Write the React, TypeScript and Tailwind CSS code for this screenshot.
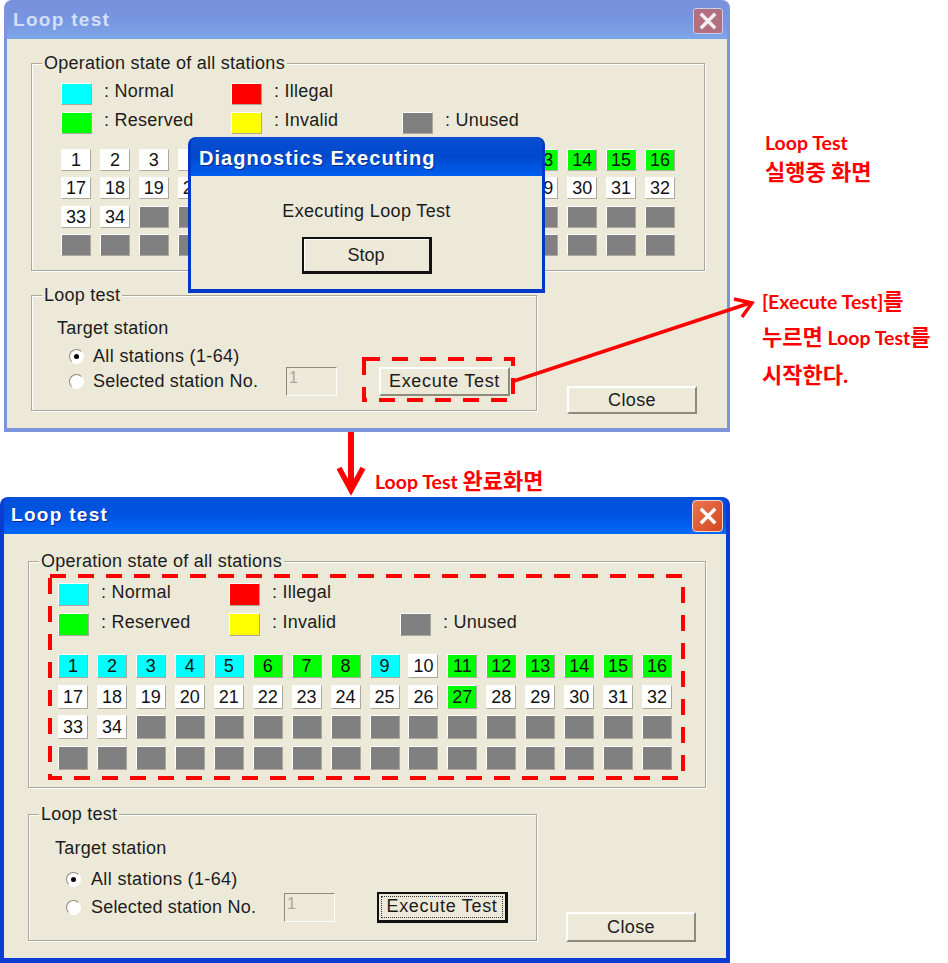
const sansFont = "font-['Liberation_Sans',Arial,sans-serif]";
const noteFont = "font-['Lato','Noto_Sans_CJK_KR',sans-serif]";

const raised =
  "border-[1.5px] border-t-white border-l-white border-r-[#aca899] border-b-[#aca899]";

type Tone = "white" | "cyan" | "green" | "gray" | "red" | "yellow";

const toneClass: Record<Tone, string> = {
  white: "bg-white",
  cyan: "bg-[#00ffff]",
  green: "bg-[#00ff00]",
  gray: "bg-[#808080]",
  red: "bg-[#ff0000]",
  yellow: "bg-[#ffff00]",
};

const layouts = {
  inactive: {
    frame: "left-[4px] top-0 w-[726px] h-[432px] bg-[#7d94dc] px-[3px] pb-[4px]",
    title: "h-[39px] pl-[6px] pr-[4px] pt-[2px] bg-gradient-to-b from-[#7990dc] via-[#7795e0] to-[#7ea6ea]",
    titleText: "text-[#d3dff6]",
    body: "h-[389px] pt-[24px] pl-[24px]",
    group1: "w-[674px] h-[208px] pl-[29px] pt-[19px]",
    legendGrid: "grid-cols-[170px_171px_1fr] gap-y-[7px]",
    swatch: "h-[22px]",
    cells: "mt-[15px] gap-y-[6.4px]",
    cell: "h-[22px]",
    lower: "mt-[24px]",
    group2: "w-[506px] h-[116px] pl-[25px] pt-[21px]",
    radios: "mt-[6px] gap-y-[3px] pl-[12px]",
    radioLabel: "ml-[9px]",
    close: "mt-[91px] ml-[30px] h-[28px]",
    execute: "h-[29px]",
  },
  active: {
    frame: "left-0 top-[497px] w-[730px] h-[466px] bg-[#0a3ed2] px-[4px] pb-[5px]",
    title: "h-[37px] pl-[7px] pr-[3px] bg-gradient-to-b from-[#0050d8] via-[#0054e3] to-[#0068f8]",
    titleText: "text-white [text-shadow:1px_1px_0_#0a2a90]",
    body: "h-[424px] pt-[27px] pl-[24px]",
    group1: "w-[678px] h-[227px] pl-[29px] pt-[21px]",
    legendGrid: "grid-cols-[171px_171px_1fr] gap-y-[7px]",
    swatch: "h-[23px]",
    cells: "mt-[18px] gap-y-[6.5px]",
    cell: "h-[24px]",
    lower: "mt-[26px]",
    group2: "w-[509px] h-[127px] pl-[26px] pt-[22px]",
    radios: "mt-[9px] gap-y-[6px] pl-[11px]",
    radioLabel: "ml-[10px]",
    close: "mt-[98px] ml-[29px] h-[30px]",
    execute: "h-[31px]",
  },
};

function stationTone(n: number, state: "running" | "done"): Tone {
  if (n > 34) return "gray";
  if (state === "running") return n >= 13 && n <= 16 ? "green" : "white";
  if (n <= 5 || n === 9) return "cyan";
  if ((n >= 6 && n <= 8) || (n >= 11 && n <= 16) || n === 27) return "green";
  return "white";
}

// numbers that sit completely under the diagnostics dialog are not drawn
function stationLabel(n: number, state: "running" | "done") {
  if (n > 34) return "";
  if (state === "running" && ((n >= 4 && n <= 12) || (n >= 21 && n <= 28))) return "";
  return n;
}

function GroupBox({ label, className, children }: { label: string; className: string; children: React.ReactNode }) {
  return (
    <div className={`relative border border-[#aca899] shadow-[1px_1px_0_#fff,inset_1px_1px_0_#fff] ${className}`}>
      <span className="absolute left-[10px] top-[-12px] bg-[#ece9d8] px-[2px] text-[18px] leading-[22px] tracking-[0.25px] text-[#1c1c1c]">
        {label}
      </span>
      {children}
    </div>
  );
}

function LegendItem({ tone, label, height }: { tone: Tone; label: string; height: string }) {
  return (
    <div className="flex items-center gap-x-[12px]">
      <div className={`w-[31px] ${height} ${toneClass[tone]} ${raised}`} />
      <span className="-translate-y-[3px] text-[18px] leading-[20px] tracking-[0.25px] text-[#1c1c1c]">: {label}</span>
    </div>
  );
}

function Radio({ checked }: { checked?: boolean }) {
  return (
    <div className="flex h-[15px] w-[15px] items-center justify-center rounded-full border-[1.5px] border-t-[#8e8b7c] border-l-[#8e8b7c] border-r-white border-b-white bg-white">
      {checked && <div className="h-[5px] w-[5px] rounded-full bg-black" />}
    </div>
  );
}

function CloseGlyph({ active }: { active: boolean }) {
  return (
    <div
      className={
        active
          ? "flex h-[32px] w-[31px] items-center justify-center rounded-[4px] border border-[#f3d6c8] bg-gradient-to-br from-[#e8764e] to-[#d4451f]"
          : "flex h-[26px] w-[30px] items-center justify-center rounded-[3px] border border-[#c6cfe9] bg-[#b36f80]"
      }
    >
      <svg viewBox="0 0 20 20" className="h-[20px] w-[20px]">
        <path d="M4 4 L16 16 M16 4 L4 16" stroke={active ? "#ffffff" : "#f4f0f2"} strokeWidth="3.4" strokeLinecap="square" fill="none" />
      </svg>
    </div>
  );
}

function StationWindow({ variant }: { variant: "inactive" | "active" }) {
  const l = layouts[variant];
  const active = variant === "active";
  const state = active ? "done" : "running";
  return (
    <div className={`absolute flex flex-col rounded-t-[8px] ${l.frame}`}>
      <div className={`flex shrink-0 items-center justify-between rounded-t-[6px] ${l.title}`}>
        <span className={`text-[19px] font-bold tracking-[1.3px] ${l.titleText}`}>Loop test</span>
        <CloseGlyph active={active} />
      </div>
      <div className={`bg-[#ece9d8] ${l.body}`}>
        <GroupBox label="Operation state of all stations" className={l.group1}>
          <div className={`grid ${l.legendGrid}`}>
            <LegendItem tone="cyan" label="Normal" height={l.swatch} />
            <LegendItem tone="red" label="Illegal" height={l.swatch} />
            <div />
            <LegendItem tone="green" label="Reserved" height={l.swatch} />
            <LegendItem tone="yellow" label="Invalid" height={l.swatch} />
            <LegendItem tone="gray" label="Unused" height={l.swatch} />
          </div>
          <div className={`grid w-[615px] grid-cols-[repeat(16,30px)] gap-x-[8.95px] ${l.cells}`}>
            {Array.from({ length: 64 }, (_, i) => i + 1).map((n) => (
              <div
                key={n}
                className={`flex items-center justify-center text-[18px] leading-none text-[#111] ${l.cell} ${toneClass[stationTone(n, state)]} ${raised}`}
              >
                {stationLabel(n, state)}
              </div>
            ))}
          </div>
        </GroupBox>
        <div className={`flex items-start ${l.lower}`}>
          <GroupBox label="Loop test" className={l.group2}>
            <div className="text-[18px] leading-[22px] tracking-[0.25px] text-[#1c1c1c]">Target station</div>
            <div className={`flex flex-col ${l.radios}`}>
              <div className="flex h-[22px] items-center">
                <Radio checked />
                <span className={`text-[18px] tracking-[0.35px] text-[#1c1c1c] ${l.radioLabel}`}>All stations (1-64)</span>
              </div>
              <div className="flex h-[22px] items-center">
                <Radio />
                <span className={`w-[193px] text-[18px] tracking-[0.2px] whitespace-nowrap text-[#1c1c1c] ${l.radioLabel}`}>Selected station No.</span>
                <div className="h-[29px] w-[51px] shrink-0 border-[1.5px] border-t-[#8e8b7c] border-l-[#8e8b7c] border-r-white border-b-white pl-[2px] text-[16px] leading-[20px] text-[#aca899]">
                  1
                </div>
                {active ? (
                  <div className={`ml-[42px] flex w-[131px] shrink-0 items-center justify-center border-2 border-[#111] border-r-[3px] border-b-[3px] p-[2px] ${l.execute}`}>
                    <div className="flex h-full w-full items-center justify-center border border-dotted border-[#333] text-[18px] tracking-[0.7px] text-[#1c1c1c]">
                      Execute Test
                    </div>
                  </div>
                ) : (
                  <div className={`ml-[42px] flex w-[131px] shrink-0 items-center justify-center border-2 border-t-white border-l-white border-r-[#8e8b7c] border-b-[#8e8b7c] text-[18px] tracking-[0.7px] text-[#1c1c1c] ${l.execute}`}>
                    Execute Test
                  </div>
                )}
              </div>
            </div>
          </GroupBox>
          <div className={`flex w-[130px] items-center justify-center border-2 border-t-white border-l-white border-r-[#8e8b7c] border-b-[#8e8b7c] text-[18px] tracking-[0.4px] text-[#1c1c1c] ${l.close}`}>
            Close
          </div>
        </div>
      </div>
    </div>
  );
}

function DiagnosticsDialog() {
  return (
    <div className="absolute left-[188px] top-[137px] flex h-[156px] w-[357px] flex-col rounded-t-[8px] bg-[#0038c8] px-[3px] pb-[4px]">
      <div className="flex h-[39px] shrink-0 items-center rounded-t-[6px] bg-gradient-to-b from-[#0a4fd2] via-[#0048cc] to-[#0060f0] pl-[8px] pt-[3px]">
        <span className="text-[20px] font-bold tracking-[1.05px] text-white [text-shadow:1px_1px_0_#0a2a90]">Diagnostics Executing</span>
      </div>
      <div className="flex flex-1 flex-col items-center bg-[#ece9d8] pt-[24px]">
        <span className="text-[18px] leading-[22px] tracking-[0.35px] text-[#1c1c1c]">Executing Loop Test</span>
        <div className="mt-[15px] flex h-[37px] w-[130px] items-center justify-center border-2 border-[#111] border-r-[3px] border-b-[3px] text-[18px] text-[#1c1c1c] shadow-[inset_1px_1px_0_#fff]">
          Stop
        </div>
      </div>
    </div>
  );
}

function Annotations() {
  return (
    <svg viewBox="0 0 948 963" className="pointer-events-none absolute left-0 top-0 h-[963px] w-[948px]">
      <rect x="364" y="359" width="149" height="41" fill="none" stroke="#ff0000" strokeWidth="4" strokeDasharray="16 12" />
      <rect x="50" y="576" width="633" height="202" fill="none" stroke="#ff0000" strokeWidth="4" strokeDasharray="16 12" />
      <path d="M514 381 L750 303" stroke="#ff0000" strokeWidth="3.5" fill="none" />
      <path d="M734 299 L752 303 L742 317" stroke="#ff0000" strokeWidth="3.5" fill="none" />
      <path d="M351 432 L351 490" stroke="#ff0000" strokeWidth="6" fill="none" />
      <path d="M339 468 L351 490 L363 468" stroke="#ff0000" strokeWidth="5.5" fill="none" />
    </svg>
  );
}

function Note({ className, children }: { className: string; children: React.ReactNode }) {
  return (
    <div className={`absolute whitespace-nowrap text-[19.5px] leading-[26px] font-bold text-[#ff0000] ${noteFont} ${className}`}>
      {children}
    </div>
  );
}

function Ko({ children }: { children: React.ReactNode }) {
  return <span className="text-[22px]">{children}</span>;
}

export default function App() {
  return (
    <div className={`relative h-[963px] w-[948px] overflow-hidden bg-white ${sansFont}`}>
      <StationWindow variant="inactive" />
      <DiagnosticsDialog />
      <StationWindow variant="active" />
      <Annotations />
      <Note className="left-[765px] top-[130px]">Loop Test</Note>
      <Note className="left-[765px] top-[159px]"><Ko>실행중 화면</Ko></Note>
      <Note className="left-[762px] top-[288px]">[Execute Test]<Ko>를</Ko></Note>
      <Note className="left-[762px] top-[324px]"><Ko>누르면</Ko> Loop Test<Ko>를</Ko></Note>
      <Note className="left-[762px] top-[362px]"><Ko>시작한다.</Ko></Note>
      <Note className="left-[375px] top-[468px]">Loop Test <Ko>완료화면</Ko></Note>
    </div>
  );
}
